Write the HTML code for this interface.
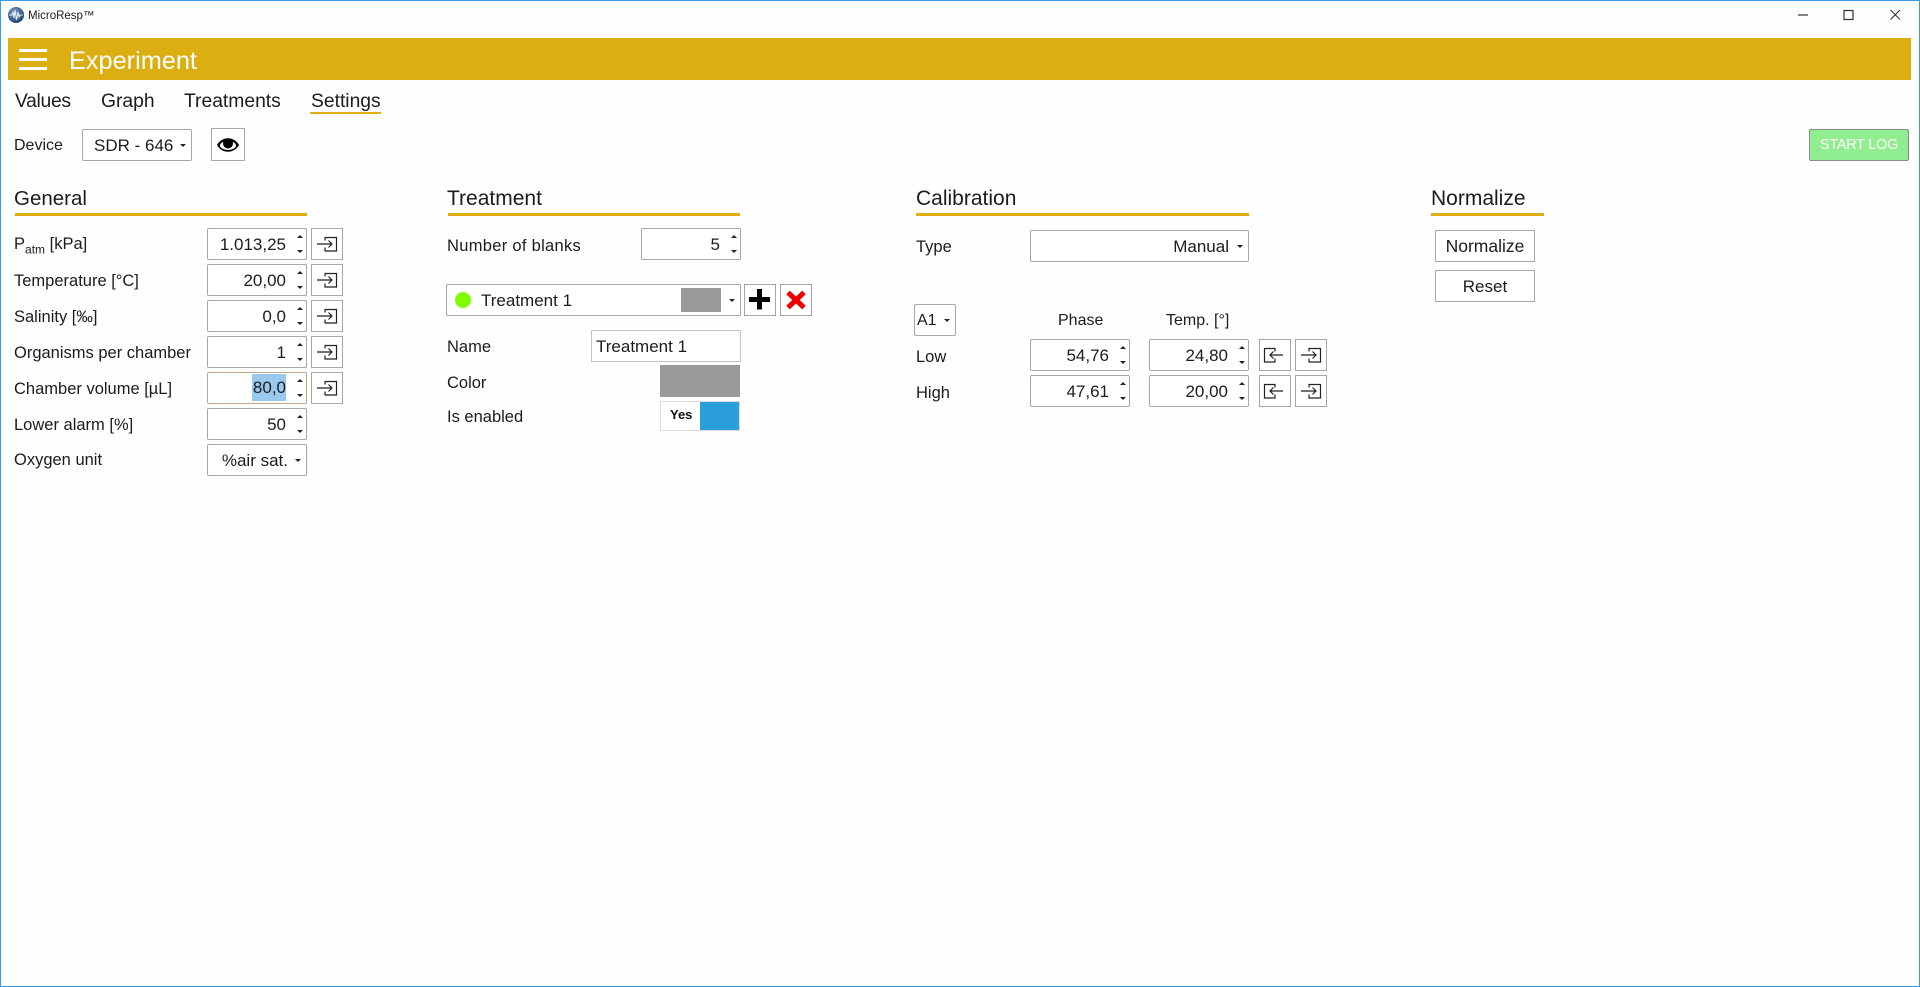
<!DOCTYPE html>
<html><head><meta charset="utf-8"><title>MicroResp</title>
<style>
html,body{margin:0;padding:0;background:#fefefe;overflow:hidden}
#w{position:relative;width:1920px;height:987px;overflow:hidden;background:#fefefe;font-family:"Liberation Sans",sans-serif;color:#1c1c1c;font-size:16.5px}
#f{position:absolute;left:0;top:0;width:1920px;height:987px;box-sizing:border-box;border:1px solid #3a9ae2;pointer-events:none}
.t{position:absolute;white-space:nowrap;line-height:20px}
.h{font-size:21px;margin-top:1px}
.u{position:absolute;height:3px;background:#e0b012}
.b{position:absolute;box-sizing:border-box;border:1px solid #a6a6a6;border-radius:2px;background:#fff;height:32px;line-height:31px;font-size:17px;text-align:right;white-space:nowrap}
.s{width:100px;padding-right:20px}
.up,.dn,.dd{position:absolute;width:0;height:0;border-left:3px solid transparent;border-right:3px solid transparent}
.up{right:3px;top:6px;border-bottom:3px solid #222}
.dn{right:3px;bottom:6px;border-top:3px solid #222}
.dd{top:14px;border-top:3px solid #222}
.i{position:absolute;box-sizing:border-box;width:32px;height:32px;border:1px solid #a6a6a6;background:#fff}
.i svg{position:absolute;left:0;top:0}
</style></head><body><div id="w">
<svg width="0" height="0" style="position:absolute"><defs>
<g id="in"><path d="M5 15H20M16.500 11.500L20 15L16.500 18.500M13 11.500V8.500H24.500V22H13V18.500" fill="none" stroke="#222" stroke-width="1.200"/></g>
<g id="out"><path d="M23 15H10M13.500 11.500L10 15L13.500 18.500M15 11.500V8.500H4.500V22H15V18.500" fill="none" stroke="#222" stroke-width="1.200"/></g>
<radialGradient id="g" cx=".4" cy=".35" r=".7"><stop offset="0" stop-color="#7fa6cf"/><stop offset="1" stop-color="#143a66"/></radialGradient>
</defs></svg>

<svg style="position:absolute;left:8px;top:7px" width="16" height="16" viewBox="0 0 16 16"><circle cx="8" cy="8" r="8" fill="url(#g)"/><path d="M1 8H4L5 5L6 11L7 3L8.500 13L10 5L11 10L12 8H15" fill="none" stroke="#e6eef6" stroke-width="1"/></svg>
<div class="t" style="left:28px;top:6px;font-size:11.500px">MicroResp™</div>
<svg style="position:absolute;left:1790px;top:8px" width="120" height="16" viewBox="0 0 120 16"><path d="M8 7H18" stroke="#333" stroke-width="1.200"/><path d="M54 2.500H63V11.500H54Z" fill="none" stroke="#333" stroke-width="1.200"/><path d="M100.500 2L110 11.500M110 2L100.500 11.500" stroke="#333" stroke-width="1.100"/></svg>

<div style="position:absolute;left:8px;top:38px;width:1903px;height:42px;background:#dbae12"></div>
<div style="position:absolute;left:19px;top:49px;width:28px;height:3px;background:#fff"></div>
<div style="position:absolute;left:19px;top:58px;width:28px;height:3px;background:#fff"></div>
<div style="position:absolute;left:19px;top:67px;width:28px;height:3px;background:#fff"></div>
<div class="t" style="left:69px;top:50px;font-size:25.300px;line-height:22px;color:#fff">Experiment</div>

<div class="t" style="left:15px;top:92px;font-size:19.300px;letter-spacing:-.3px">Values</div>
<div class="t" style="left:101px;top:92px;font-size:19.300px">Graph</div>
<div class="t" style="left:184px;top:92px;font-size:19.300px">Treatments</div>
<div class="t" style="left:311px;top:92px;font-size:19.300px">Settings</div>
<div class="u" style="left:310px;top:112px;width:71px;height:2px"></div>

<div class="t" style="left:14px;top:136px;font-size:16px">Device</div>
<div class="b" style="left:82px;top:129px;width:110px;text-align:left;padding-left:11px;font-size:17px">SDR - 646<span class="dd" style="right:5px"></span></div>
<div class="i" style="left:211px;top:128px;width:34px;height:33px"><svg width="32" height="31" viewBox="0 0 32 31"><path d="M5 16C10 7 22 7 27 16C22 25 10 25 5 16Z" fill="#000"/><ellipse cx="16" cy="16.500" rx="8" ry="4.500" fill="#fff"/><circle cx="16" cy="14.500" r="5" fill="#000"/></svg></div>
<div class="b" style="left:1809px;top:129px;width:100px;background:#90ee90;color:#fff;text-align:center;font-size:14.500px;letter-spacing:-.3px;border-color:#8c8c8c">START LOG</div>

<!-- General -->
<div class="t h" style="left:14px;top:188px;font-size:20.500px">General</div>
<div class="u" style="left:15px;top:213px;width:292px"></div>
<div class="t" style="left:14px;top:234px">P<sub style="font-size:12px;line-height:0">atm</sub> [kPa]</div>
<div class="t" style="left:14px;top:271px">Temperature [°C]</div>
<div class="t" style="left:14px;top:307px">Salinity [‰]</div>
<div class="t" style="left:14px;top:343px">Organisms per chamber</div>
<div class="t" style="left:14px;top:379px">Chamber volume [µL]</div>
<div class="t" style="left:14px;top:415px">Lower alarm [%]</div>
<div class="t" style="left:14px;top:450px">Oxygen unit</div>

<div class="b s" style="left:207px;top:228px">1.013,25<i class="up"></i><i class="dn"></i></div>
<div class="b s" style="left:207px;top:264px">20,00<i class="up"></i><i class="dn"></i></div>
<div class="b s" style="left:207px;top:300px">0,0<i class="up"></i><i class="dn"></i></div>
<div class="b s" style="left:207px;top:336px">1<i class="up"></i><i class="dn"></i></div>
<div class="b s" style="left:207px;top:372px;border-color:#bda88f"><span style="background:#99c9ef;display:inline-block;height:27px;line-height:27px;vertical-align:top;margin-top:1px;padding-left:1px">80,0</span><i class="up"></i><i class="dn"></i></div>
<div class="b s" style="left:207px;top:408px">50<i class="up"></i><i class="dn"></i></div>
<div class="b s" style="left:207px;top:444px;padding-right:18px">%air sat.<span class="dd" style="right:5px"></span></div>

<div class="i" style="left:311px;top:228px"><svg width="30" height="30"><use href="#in"/></svg></div>
<div class="i" style="left:311px;top:264px"><svg width="30" height="30"><use href="#in"/></svg></div>
<div class="i" style="left:311px;top:300px"><svg width="30" height="30"><use href="#in"/></svg></div>
<div class="i" style="left:311px;top:336px"><svg width="30" height="30"><use href="#in"/></svg></div>
<div class="i" style="left:311px;top:372px"><svg width="30" height="30"><use href="#in"/></svg></div>

<!-- Treatment -->
<div class="t h" style="left:447px;top:188px">Treatment</div>
<div class="u" style="left:448px;top:213px;width:292px"></div>
<div class="t" style="left:447px;top:236px;letter-spacing:.3px">Number of blanks</div>
<div class="b s" style="left:641px;top:228px">5<i class="up"></i><i class="dn"></i></div>

<div class="b" style="left:446px;top:284px;width:295px;text-align:left">
<span style="position:absolute;left:8px;top:7px;width:16px;height:16px;border-radius:50%;background:#80ff00"></span>
<span style="position:absolute;left:34px;top:0">Treatment 1</span>
<span style="position:absolute;left:234px;top:3px;width:40px;height:24px;background:#999"></span>
<span class="dd" style="right:5px"></span></div>
<div class="i" style="left:744px;top:284px"><svg width="30" height="30"><path d="M14.500 4V24.500M4 14.500H25" stroke="#000" stroke-width="5"/></svg></div>
<div class="i" style="left:780px;top:284px"><svg width="30" height="30"><path d="M7 7.500L23 22.500M23 7.500L7 22.500" stroke="#f00000" stroke-width="5"/></svg></div>

<div class="t" style="left:447px;top:337px">Name</div>
<div class="b" style="left:591px;top:330px;width:150px;border-color:#c4c4c4;border-radius:0;text-align:left;padding-left:4px;font-size:17px">Treatment 1</div>
<div class="t" style="left:447px;top:373px">Color</div>
<div style="position:absolute;left:660px;top:365px;width:80px;height:32px;background:#999"></div>
<div class="t" style="left:447px;top:407px">Is enabled</div>
<div style="position:absolute;left:660px;top:401px;width:80px;height:30px;box-sizing:border-box;border:1px solid #dcdcdc;background:#fff"></div>
<div style="position:absolute;left:700px;top:402px;width:39px;height:28px;background:#2a9fdc"></div>
<div class="t" style="left:670px;top:405px;font-size:13px;font-weight:bold;color:#111">Yes</div>

<!-- Calibration -->
<div class="t h" style="left:916px;top:188px">Calibration</div>
<div class="u" style="left:916px;top:213px;width:333px"></div>
<div class="t" style="left:916px;top:237px">Type</div>
<div class="b" style="left:1030px;top:230px;width:219px;padding-right:19px">Manual<span class="dd" style="right:5px"></span></div>
<div class="b" style="left:914px;top:304px;width:42px;text-align:left;padding-left:2px;font-size:16px">A1<span class="dd" style="right:5px"></span></div>
<div class="t" style="left:1058px;top:311px;font-size:16px">Phase</div>
<div class="t" style="left:1166px;top:311px;font-size:16px">Temp. [°]</div>
<div class="t" style="left:916px;top:347px">Low</div>
<div class="t" style="left:916px;top:383px">High</div>
<div class="b s" style="left:1030px;top:339px">54,76<i class="up"></i><i class="dn"></i></div>
<div class="b s" style="left:1149px;top:339px">24,80<i class="up"></i><i class="dn"></i></div>
<div class="b s" style="left:1030px;top:375px">47,61<i class="up"></i><i class="dn"></i></div>
<div class="b s" style="left:1149px;top:375px">20,00<i class="up"></i><i class="dn"></i></div>
<div class="i" style="left:1259px;top:339px"><svg width="30" height="30"><use href="#out"/></svg></div>
<div class="i" style="left:1295px;top:339px"><svg width="30" height="30"><use href="#in"/></svg></div>
<div class="i" style="left:1259px;top:375px"><svg width="30" height="30"><use href="#out"/></svg></div>
<div class="i" style="left:1295px;top:375px"><svg width="30" height="30"><use href="#in"/></svg></div>

<!-- Normalize -->
<div class="t h" style="left:1431px;top:188px">Normalize</div>
<div class="u" style="left:1431px;top:213px;width:113px"></div>
<div class="b" style="left:1435px;top:230px;width:100px;text-align:center;border-radius:0;font-size:17.500px">Normalize</div>
<div class="b" style="left:1435px;top:270px;width:100px;text-align:center;border-radius:0">Reset</div>

<div id="f"></div>
</div></body></html>
